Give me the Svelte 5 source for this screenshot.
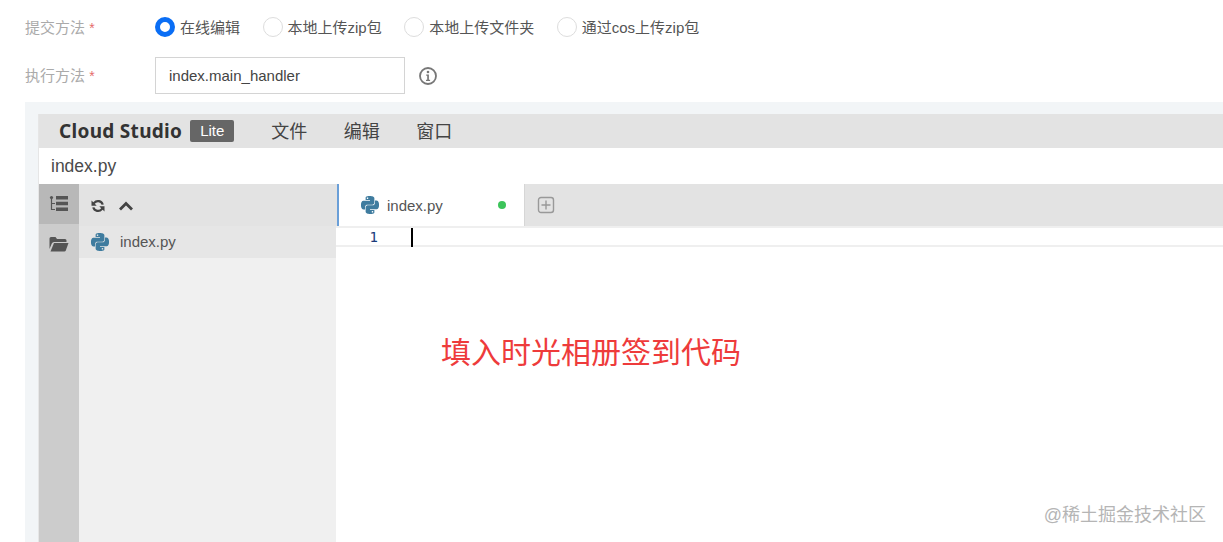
<script>
  const methods = ["在线编辑", "本地上传zip包", "本地上传文件夹", "通过cos上传zip包"];
  const menus = ["文件", "编辑", "窗口"];
  const python =
    "M14.25.18l.9.2.73.26.59.3.45.32.34.34.25.34.16.33.1.3.04.26.02.2-.01.13V8.5l-.05.63-.13.55-.21.46-.26.38-.3.31-.33.25-.35.19-.35.14-.33.1-.3.07-.26.04-.21.02H8.77l-.69.05-.59.14-.5.22-.41.27-.33.32-.27.35-.2.36-.15.37-.1.35-.07.32-.04.27-.02.21v3.06H3.17l-.21-.03-.28-.07-.32-.12-.35-.18-.36-.26-.36-.36-.35-.46-.32-.59-.28-.73-.21-.88-.14-1.05-.05-1.23.06-1.22.16-1.04.24-.87.32-.71.36-.57.4-.44.42-.33.42-.24.4-.16.36-.1.32-.05.24-.01h.16l.06.01h8.16v-.83H6.18l-.01-2.75-.02-.37.05-.34.11-.31.17-.28.25-.26.31-.23.38-.2.44-.18.51-.15.58-.12.64-.1.71-.06.77-.04.84-.02 1.27.05zm-6.3 1.98l-.23.33-.08.41.08.41.23.34.33.22.41.09.41-.09.33-.22.23-.34.08-.41-.08-.41-.23-.33-.33-.22-.41-.09-.41.09zm13.09 3.95l.28.06.32.12.35.18.36.27.36.35.35.47.32.59.28.73.21.88.14 1.04.05 1.23-.06 1.23-.16 1.04-.24.86-.32.71-.36.57-.4.45-.42.33-.42.24-.4.16-.36.09-.32.05-.24.02-.16-.01h-8.22v.82h5.84l.01 2.76.02.36-.05.34-.11.31-.17.29-.25.25-.31.24-.38.2-.44.17-.51.15-.58.13-.64.09-.71.07-.77.04-.84.01-1.27-.04-1.07-.14-.9-.2-.73-.25-.59-.3-.45-.33-.34-.34-.25-.34-.16-.33-.1-.3-.04-.25-.02-.2.01-.13v-5.34l.05-.64.13-.54.21-.46.26-.38.3-.32.33-.24.35-.2.35-.14.33-.1.3-.06.26-.04.21-.02.13-.01h5.84l.69-.05.59-.14.5-.21.41-.28.33-.32.27-.35.2-.36.15-.36.1-.35.07-.32.04-.28.02-.21V6.07h2.09l.14.01zm-6.47 14.25l-.23.33-.08.41.08.41.23.33.33.23.41.08.41-.08.33-.23.23-.33.08-.41-.08-.41-.23-.33-.33-.23-.41-.08-.41.08z";
</script>

<div class="page">
  <div class="form">
    <div class="row first">
      <div class="label">提交方法 <span class="req">*</span></div>
      <div class="radios">
        {#each methods as method, index}
          <div class="radio">
            <span class="dot {index === 0 ? 'on' : ''}"></span>
            <span class="radiotext">{method}</span>
          </div>
        {/each}
      </div>
    </div>
    <div class="row second">
      <div class="label">执行方法 <span class="req">*</span></div>
      <div class="input">index.main_handler</div>
      <svg class="info" viewBox="0 0 20 20" width="20" height="20">
        <circle cx="10" cy="10" r="8" fill="none" stroke="#777" stroke-width="1.8" />
        <circle cx="10" cy="6" r="1.3" fill="#777" />
        <path d="M8.2 8.6h2.7v5.2h1.2v1.1H8v-1.1h1.2V9.7h-1z" fill="#777" />
      </svg>
    </div>
  </div>

  <div class="panel">
    <div class="studio">
      <div class="topbar">
        <span class="brand">Cloud Studio</span>
        <span class="lite">Lite</span>
        <div class="menus">
          {#each menus as menu}
            <span>{menu}</span>
          {/each}
        </div>
      </div>
      <div class="filename">index.py</div>
      <div class="workspace">
        <div class="rail">
          <div class="railitem active">
            <svg viewBox="0 0 20 18" width="20" height="18">
              <circle cx="2.5" cy="2.5" r="1.6" fill="#555" />
              <path d="M2.5 3v11.5H6M2.5 8.500H6" fill="none" stroke="#555" stroke-width="1.2" />
              <path d="M7 1h12v3.600H7zM7 6.800h12v3.400H7zM7 12.600h12v3.400H7z" fill="#555" />
            </svg>
          </div>
          <div class="railitem">
            <svg viewBox="0 0 20 16" width="20" height="16">
              <path d="M0.500 2.500Q0.500 1 2 1h4.500l1.500 2h8q1.500 0 1.500 1.500V6H5Q3.500 6 2.800 7.500L0.500 13z" fill="#555" />
              <path d="M5 7h14.500L16.800 14.500Q16.400 15.500 15.300 15.500H1.500z" fill="#555" />
            </svg>
          </div>
        </div>
        <div class="sidebar">
          <div class="sidehead">
            <svg viewBox="0 0 16 16" width="16" height="16">
              <path d="M13.800 6.400A6 6 0 0 0 3.300 4.200L1.500 2.500v5.200h5.200L4.800 5.800A3.900 3.900 0 0 1 11.600 6.800z" fill="#444" />
              <path d="M2.200 9.600A6 6 0 0 0 12.700 11.800L14.500 13.500V8.300H9.300l1.900 1.900A3.900 3.900 0 0 1 4.400 9.200z" fill="#444" />
            </svg>
            <svg viewBox="0 0 16 12" width="16" height="12">
              <path d="M2 9.500L8 3.500l6 6" fill="none" stroke="#444" stroke-width="2.800" />
            </svg>
          </div>
          <div class="fileitem">
            <svg viewBox="0 0 24 24" width="18" height="18"><path d={python} fill="#3f7c9f" /></svg>
            <span class="filetext">index.py</span>
          </div>
        </div>
        <div class="main">
          <div class="tabbar">
            <div class="tab">
              <svg viewBox="0 0 24 24" width="18" height="18"><path d={python} fill="#3f7c9f" /></svg>
              <span class="tabname">index.py</span>
              <span class="saved"></span>
            </div>
            <svg class="plus" viewBox="0 0 18 18" width="18" height="18">
              <rect x="1.500" y="1.500" width="15" height="15" rx="2.500" fill="none" stroke="#999" stroke-width="1.400" />
              <path d="M9 4.500v9M4.500 9h9" stroke="#999" stroke-width="1.400" />
            </svg>
          </div>
          <div class="line">
            <span class="lineno">1</span>
            <span class="code"><span class="caret"></span></span>
          </div>
        </div>
      </div>
    </div>
  </div>

  <div class="note">填入时光相册签到代码</div>
  <div class="mark">@稀土掘金技术社区</div>
</div>

<style>
  :global(body) {
    margin: 0;
    background: #fff;
  }

  .page {
    position: relative;
    width: 1223px;
    height: 542px;
    overflow: hidden;
    font-family: "Liberation Sans", "Noto Sans CJK SC", sans-serif;
    color: #444;
  }

  .form {
    padding-left: 25px;
  }

  .row {
    display: flex;
    align-items: center;
  }

  .row.first {
    padding-top: 15px;
    height: 24px;
  }

  .row.second {
    padding-top: 18px;
  }

  .label {
    width: 130px;
    margin-top: -2px;
    font-size: 15px;
    color: #aaa;
  }

  .req {
    color: #e56b6b;
    font-size: 14px;
  }

  .radios {
    display: flex;
    gap: 22.5px;
  }

  .radio {
    display: flex;
    align-items: center;
    gap: 5px;
    font-size: 15px;
    color: #555;
  }

  .radiotext {
    margin-top: -2px;
  }

  .dot {
    box-sizing: border-box;
    width: 20px;
    height: 20px;
    border-radius: 50%;
    border: 1px solid #ddd;
    background: #fff;
  }

  .dot.on {
    border: 5px solid #0a6ef5;
  }

  .input {
    box-sizing: border-box;
    width: 250px;
    height: 37px;
    line-height: 35px;
    padding-left: 13px;
    border: 1px solid #d4d4d4;
    font-size: 15px;
    color: #444;
  }

  .info {
    margin-left: 13px;
  }

  .panel {
    margin: 8px 0 0 25px;
    padding: 12px 0 0 13px;
    background: #f2f5f7;
    height: 440px;
  }

  .studio {
    height: 100%;
    border-left: 1px solid #e6e6e6;
  }

  .topbar {
    display: flex;
    align-items: center;
    height: 34px;
    padding-left: 20px;
    background: #e3e3e3;
  }

  .brand {
    font-family: "Noto Sans", sans-serif;
    font-weight: 700;
    font-size: 19px;
    letter-spacing: 0.3px;
    color: #333;
  }

  .lite {
    margin-left: 8px;
    width: 44px;
    height: 22px;
    line-height: 22px;
    text-align: center;
    border-radius: 2px;
    background: #666;
    color: #fff;
    font-size: 15px;
  }

  .menus {
    display: flex;
    gap: 36.5px;
    margin: -2px 0 0 37px;
    font-size: 18px;
    color: #444;
  }

  .filename {
    height: 36px;
    line-height: 36px;
    padding-left: 12px;
    background: #fff;
    font-size: 17.5px;
    color: #4a4a4a;
  }

  .workspace {
    display: flex;
    height: 400px;
    background: #fff;
  }

  .rail {
    width: 40px;
    flex-shrink: 0;
    background: #ccc;
  }

  .railitem {
    display: flex;
    align-items: center;
    justify-content: center;
    height: 40px;
  }

  .railitem.active {
    background: #b8b8b8;
  }

  .sidebar {
    width: 257px;
    flex-shrink: 0;
    background: #f0f0f0;
  }

  .sidehead {
    display: flex;
    align-items: center;
    gap: 12px;
    height: 42px;
    padding: 2px 0 0 11px;
    box-sizing: border-box;
    background: #e3e3e3;
  }

  .fileitem {
    display: flex;
    align-items: center;
    gap: 11px;
    height: 32px;
    padding-left: 12px;
    background: #e6e6e6;
    font-size: 15px;
    color: #555;
  }

  .filetext {
    margin-top: -1px;
  }

  .main {
    flex: 1;
    min-width: 0;
  }

  .tabbar {
    display: flex;
    align-items: center;
    height: 42px;
    background: #e3e3e3;
  }

  .tab {
    box-sizing: border-box;
    display: flex;
    align-items: center;
    width: 188px;
    height: 42px;
    margin-left: 1px;
    padding: 0 18px 0 22px;
    border-left: 2px solid #6a9fd8;
    border-right: 1px solid #d6d6d6;
    background: #fff;
    font-size: 15px;
    color: #555;
  }

  .tabname {
    flex: 1;
    margin-left: 8px;
  }

  .saved {
    width: 8px;
    height: 8px;
    border-radius: 50%;
    background: #3cc45a;
  }

  .plus {
    margin-left: 12px;
  }

  .line {
    display: flex;
    height: 17px;
    border-top: 2px solid #efefef;
    border-bottom: 2px solid #efefef;
    font-family: "DejaVu Sans Mono", monospace;
    font-size: 14px;
    line-height: 18px;
    color: #1a3a7a;
  }

  .lineno {
    width: 42px;
    text-align: right;
  }

  .code {
    margin-left: 33px;
  }

  .caret {
    display: block;
    width: 2px;
    height: 19px;
    background: #000;
  }

  .note {
    position: absolute;
    left: 441px;
    top: 333px;
    font-size: 30px;
    line-height: 40px;
    color: #ee3b3b;
  }

  .mark {
    position: absolute;
    right: 17px;
    top: 503px;
    font-size: 18px;
    line-height: 24px;
    color: #b5b5b5;
  }
</style>
